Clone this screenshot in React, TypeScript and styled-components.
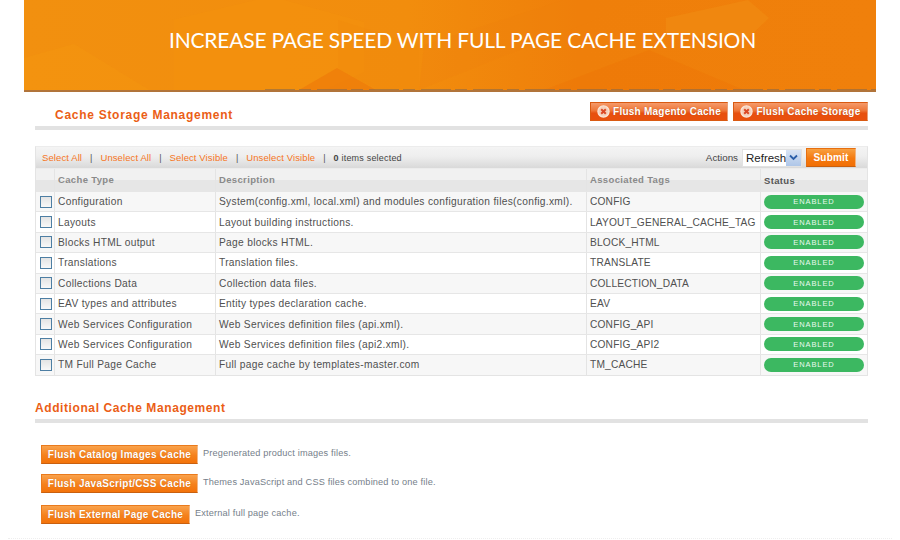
import React from "react";
import styled, { createGlobalStyle } from "styled-components";

const Global = createGlobalStyle`
  html, body { margin: 0; padding: 0; background: #fff; }
  body { font-family: "Liberation Sans", Arial, sans-serif; overflow: hidden; }
`;

const Page = styled.div`
  width: 900px;
  height: 540px;
  position: relative;
  overflow: hidden;
  display: flex;
  flex-direction: column;
  align-items: center;
`;

const Banner = styled.div`
  position: relative;
  box-sizing: border-box;
  width: 852px;
  height: 92px;
  flex: none;
  display: flex;
  align-items: center;
  justify-content: center;
  padding: 0 0 12px 25px;
  background: linear-gradient(90deg, #f2900f 0%, #f28d0d 45%, #ef7f0a 65%, #f0800b 100%);
  border-bottom: 2px solid #b1743a;
  overflow: hidden;
`;

const BannerArt = styled.svg`
  position: absolute;
  inset: 0;
  width: 100%;
  height: 100%;
`;

const BannerTitle = styled.h1`
  position: relative;
  margin: 0;
  font-family: Lato, "Open Sans", sans-serif;
  font-weight: 400;
  font-size: 21px;
  letter-spacing: -0.2px;
  color: #fff;
  white-space: nowrap;
`;

const Content = styled.div`
  box-sizing: border-box;
  width: 900px;
  padding: 10px 32px 0 35px;
  display: flex;
  flex-direction: column;
`;

const SectionHead = styled.div<{ $inset?: number }>`
  box-sizing: border-box;
  height: 28px;
  display: flex;
  align-items: flex-start;
  justify-content: space-between;
  padding-left: ${(p) => p.$inset ?? 0}px;
  border-bottom: 4px solid #e2e2e2;
`;

const SectionTitle = styled.h3<{ $spacing: number }>`
  margin: 6px 0 0;
  font-size: 12px;
  font-weight: 700;
  letter-spacing: ${(p) => p.$spacing}px;
  color: #eb5e16;
`;

const HeadActions = styled.div`
  display: flex;
  gap: 5px;
`;

const FlushButton = styled.button<{ $w: number }>`
  box-sizing: border-box;
  width: ${(p) => p.$w}px;
  height: 19px;
  padding: 0;
  display: flex;
  align-items: center;
  justify-content: center;
  gap: 3px;
  border: 1px solid #d95a12;
  border-right-color: #e9a27a;
  background: linear-gradient(#f59a6a 0%, #ee7637 45%, #e7500f 60%, #e9500d 100%);
  color: #fff;
  font-family: inherit;
  font-size: 10px;
  font-weight: 700;
  letter-spacing: 0.24px;
  text-shadow: 0 0 1px #b5470f;
  white-space: nowrap;
`;

const Grid = styled.div`
  margin-top: 16px;
  display: flex;
  flex-direction: column;
  border: 1px solid #e4e4e4;
  border-top-color: #ececec;
`;

const Toolbar = styled.div`
  box-sizing: border-box;
  height: 22px;
  display: flex;
  align-items: center;
  padding: 0 11px 0 6px;
  background: linear-gradient(#f4f4f4 0%, #eeeeee 45%, #d9d9d9 100%);
  font-size: 9px;
  color: #444;
  border-bottom: 1px solid #ececec;
`;

const ToolLink = styled.span`
  color: #f6751c;
  font-size: 9.5px;
  letter-spacing: 0.1px;
`;

const Sep = styled.span`
  margin: 1px 8px 0 8px;
  font-size: 9px;
  color: #555;
`;

const Selected = styled.span`
  font-size: 9px;
  letter-spacing: 0.2px;
  color: #444;
  margin-top: 1px;
`;

const Strong = styled.b`
  font-weight: 700;
`;

const ToolRight = styled.div`
  margin-left: auto;
  display: flex;
  align-items: center;
  gap: 4px;
`;

const ActionsLabel = styled.span`
  font-size: 9.8px;
  color: #444;
`;

const FakeSelect = styled.div`
  box-sizing: border-box;
  width: 60px;
  height: 18px;
  display: flex;
  align-items: center;
  justify-content: space-between;
  background: #fff;
  border: 1px solid #e2e2e2;
  padding-left: 3px;
  font-size: 11.5px;
  color: #222;
`;

const SelectArrow = styled.span`
  width: 15px;
  height: 16px;
  display: flex;
  align-items: center;
  justify-content: center;
  background: linear-gradient(#d9e4f4, #aec6e8);
`;

const Submit = styled.button`
  box-sizing: border-box;
  width: 50px;
  height: 19px;
  padding: 0;
  border: 1px solid #e66f10;
  border-right-color: #f2b47f;
  border-bottom-color: #c9600f;
  background: linear-gradient(#f8a040, #f47a10 55%, #f26f05);
  color: #fff;
  font-family: inherit;
  font-size: 10px;
  font-weight: 700;
  letter-spacing: 0.2px;
`;

const COLS = "18px 161px 371px 174px 1fr";

const HeaderRow = styled.div`
  display: grid;
  grid-template-columns: ${COLS};
  height: 22px;
  background: linear-gradient(#f1f1f1 0 50%, #e6e6e6 50% 100%);
`;

const HeadCell = styled.div<{ $dark?: boolean }>`
  box-sizing: border-box;
  display: flex;
  align-items: center;
  padding: 0 0 ${(p) => (p.$dark ? 0 : 2)}px 3px;
  border-left: 1px solid #e4e4e4;
  font-size: 9.5px;
  font-weight: 700;
  letter-spacing: 0.35px;
  color: ${(p) => (p.$dark ? "#555" : "#8a8a8a")};
  &:first-child { border-left: 0; }
`;

const Row = styled.div<{ $alt: boolean }>`
  display: grid;
  grid-template-columns: ${COLS};
  height: 20.4px;
  box-sizing: border-box;
  border-top: 1px solid #e6e6e6;
  background: ${(p) => (p.$alt ? "#f7f7f7" : "#fff")};
`;

const Cell = styled.div<{ $tag?: boolean }>`
  box-sizing: border-box;
  display: flex;
  align-items: center;
  padding-left: 3px;
  border-left: 1px solid #e4e4e4;
  font-size: 10.2px;
  letter-spacing: ${(p) => (p.$tag ? 0.17 : 0.31)}px;
  color: #505050;
  white-space: nowrap;
  overflow: hidden;
  &:first-child { border-left: 0; padding-left: 4px; }
`;

const Check = styled.span`
  box-sizing: border-box;
  width: 12px;
  height: 12px;
  border: 1px solid #4d7ea3;
  background: linear-gradient(#e4e4e4, #f8f8f8);
`;

const Pill = styled.div`
  box-sizing: border-box;
  width: 100px;
  height: 14px;
  border-radius: 7px;
  background: #3cb861;
  color: #e9f8ee;
  font-size: 7.5px;
  letter-spacing: 0.9px;
  display: flex;
  align-items: center;
  justify-content: center;
`;

const AdditionalBlock = styled.div`
  margin-top: 19px;
`;

const ToolList = styled.div`
  margin: 22px 0 0 6px;
  display: flex;
  flex-direction: column;
  gap: 10px;
`;

const ToolRow = styled.div<{ $mt?: number }>`
  display: flex;
  align-items: center;
  gap: 5px;
  margin-top: ${(p) => p.$mt ?? 0}px;
`;

const OrangeButton = styled.button<{ $w: number }>`
  box-sizing: border-box;
  width: ${(p) => p.$w}px;
  height: 19px;
  padding: 0;
  border: 1px solid #ea7a1c;
  border-right-color: #f2b98a;
  border-bottom-color: #c9600f;
  background: linear-gradient(#f9a24c, #f5811c 55%, #f3730a);
  color: #fff;
  font-family: inherit;
  font-size: 10px;
  font-weight: 700;
  letter-spacing: 0.28px;
  text-shadow: 0 0 1px #c45f10;
  white-space: nowrap;
`;

const Note = styled.span`
  font-size: 9.2px;
  letter-spacing: 0.16px;
  color: #76808a;
  white-space: nowrap;
  margin-top: -2px;
`;

const Footer = styled.div`
  position: absolute;
  left: 8px;
  right: 8px;
  top: 538px;
  border-top: 1px dotted #eeeeee;
`;

const CloseIcon = () => (
  <svg width="13" height="13" viewBox="0 0 13 13">
    <circle cx="6.5" cy="6.5" r="5.6" fill="#f5d2bd" stroke="#fbe6d9" strokeWidth="1.2" />
    <path d="M4.2 4.2l4.6 4.6M8.8 4.2l-4.6 4.6" stroke="#dc4a26" strokeWidth="2" />
  </svg>
);

const rows = [
  ["Configuration", "System(config.xml, local.xml) and modules configuration files(config.xml).", "CONFIG"],
  ["Layouts", "Layout building instructions.", "LAYOUT_GENERAL_CACHE_TAG"],
  ["Blocks HTML output", "Page blocks HTML.", "BLOCK_HTML"],
  ["Translations", "Translation files.", "TRANSLATE"],
  ["Collections Data", "Collection data files.", "COLLECTION_DATA"],
  ["EAV types and attributes", "Entity types declaration cache.", "EAV"],
  ["Web Services Configuration", "Web Services definition files (api.xml).", "CONFIG_API"],
  ["Web Services Configuration", "Web Services definition files (api2.xml).", "CONFIG_API2"],
  ["TM Full Page Cache", "Full page cache by templates-master.com", "TM_CACHE"],
];

const tools = [
  { label: "Flush Catalog Images Cache", note: "Pregenerated product images files.", w: 157, mt: 0 },
  { label: "Flush JavaScript/CSS Cache", note: "Themes JavaScript and CSS files combined to one file.", w: 157, mt: 0 },
  { label: "Flush External Page Cache", note: "External full page cache.", w: 149, mt: 2 },
];

export default function App() {
  return (
    <Page>
      <Global />
      <Banner>
        <BannerArt viewBox="0 0 852 90" preserveAspectRatio="none">
          <path d="M0 58L50 44L125 90H0Z" fill="#f59a12" opacity=".3" />
          <path d="M148 20L232 0H260L340 22V72L300 90H150V20Z" fill="#f5960e" opacity=".3" />
          <path d="M275 90L313 68L352 90Z" fill="#ee7a0a" opacity=".7" />
          <path d="M314 20L395 45V90H355L314 68Z" fill="#f08a0d" opacity=".4" />
          <path d="M400 45L540 0H620L395 90Z" fill="#f0800c" opacity=".3" />
          <path d="M520 90L625 50L720 90Z" fill="#ee7405" opacity=".35" />
          <path d="M642 18L724 0L745 18L724 38L642 34Z" fill="#f08c12" opacity=".6" />
          <path d="M241 89.5H852" stroke="#8a6a4a" strokeWidth="1" strokeDasharray="30 4 12 6" opacity=".6" />
        </BannerArt>
        <BannerTitle>INCREASE PAGE SPEED WITH FULL PAGE CACHE EXTENSION</BannerTitle>
      </Banner>
      <Content>
        <SectionHead $inset={20}>
          <SectionTitle $spacing={0.72}>Cache Storage Management</SectionTitle>
          <HeadActions>
            <FlushButton $w={138}><CloseIcon />Flush Magento Cache</FlushButton>
            <FlushButton $w={135}><CloseIcon />Flush Cache Storage</FlushButton>
          </HeadActions>
        </SectionHead>
        <Grid>
          <Toolbar>
            <ToolLink>Select All</ToolLink>
            <Sep>|</Sep>
            <ToolLink>Unselect All</ToolLink>
            <Sep>|</Sep>
            <ToolLink>Select Visible</ToolLink>
            <Sep>|</Sep>
            <ToolLink>Unselect Visible</ToolLink>
            <Sep>|</Sep>
            <Selected><Strong>0</Strong> items selected</Selected>
            <ToolRight>
              <ActionsLabel>Actions</ActionsLabel>
              <FakeSelect>
                Refresh
                <SelectArrow>
                  <svg width="9" height="7" viewBox="0 0 9 7">
                    <path d="M1 1.5l3.5 3.5L8 1.5" fill="none" stroke="#2a5ea8" strokeWidth="1.8" />
                  </svg>
                </SelectArrow>
              </FakeSelect>
              <Submit>Submit</Submit>
            </ToolRight>
          </Toolbar>
          <HeaderRow>
            <HeadCell />
            <HeadCell>Cache Type</HeadCell>
            <HeadCell>Description</HeadCell>
            <HeadCell>Associated Tags</HeadCell>
            <HeadCell $dark>Status</HeadCell>
          </HeaderRow>
          {rows.map((r, i) => (
            <Row key={i} $alt={i % 2 === 0}>
              <Cell><Check /></Cell>
              <Cell>{r[0]}</Cell>
              <Cell>{r[1]}</Cell>
              <Cell $tag>{r[2]}</Cell>
              <Cell><Pill>ENABLED</Pill></Cell>
            </Row>
          ))}
        </Grid>
        <AdditionalBlock>
          <SectionHead>
            <SectionTitle $spacing={0.59}>Additional Cache Management</SectionTitle>
          </SectionHead>
          <ToolList>
            {tools.map((t) => (
              <ToolRow key={t.label} $mt={t.mt}>
                <OrangeButton $w={t.w}>{t.label}</OrangeButton>
                <Note>{t.note}</Note>
              </ToolRow>
            ))}
          </ToolList>
        </AdditionalBlock>
      </Content>
      <Footer />
    </Page>
  );
}
